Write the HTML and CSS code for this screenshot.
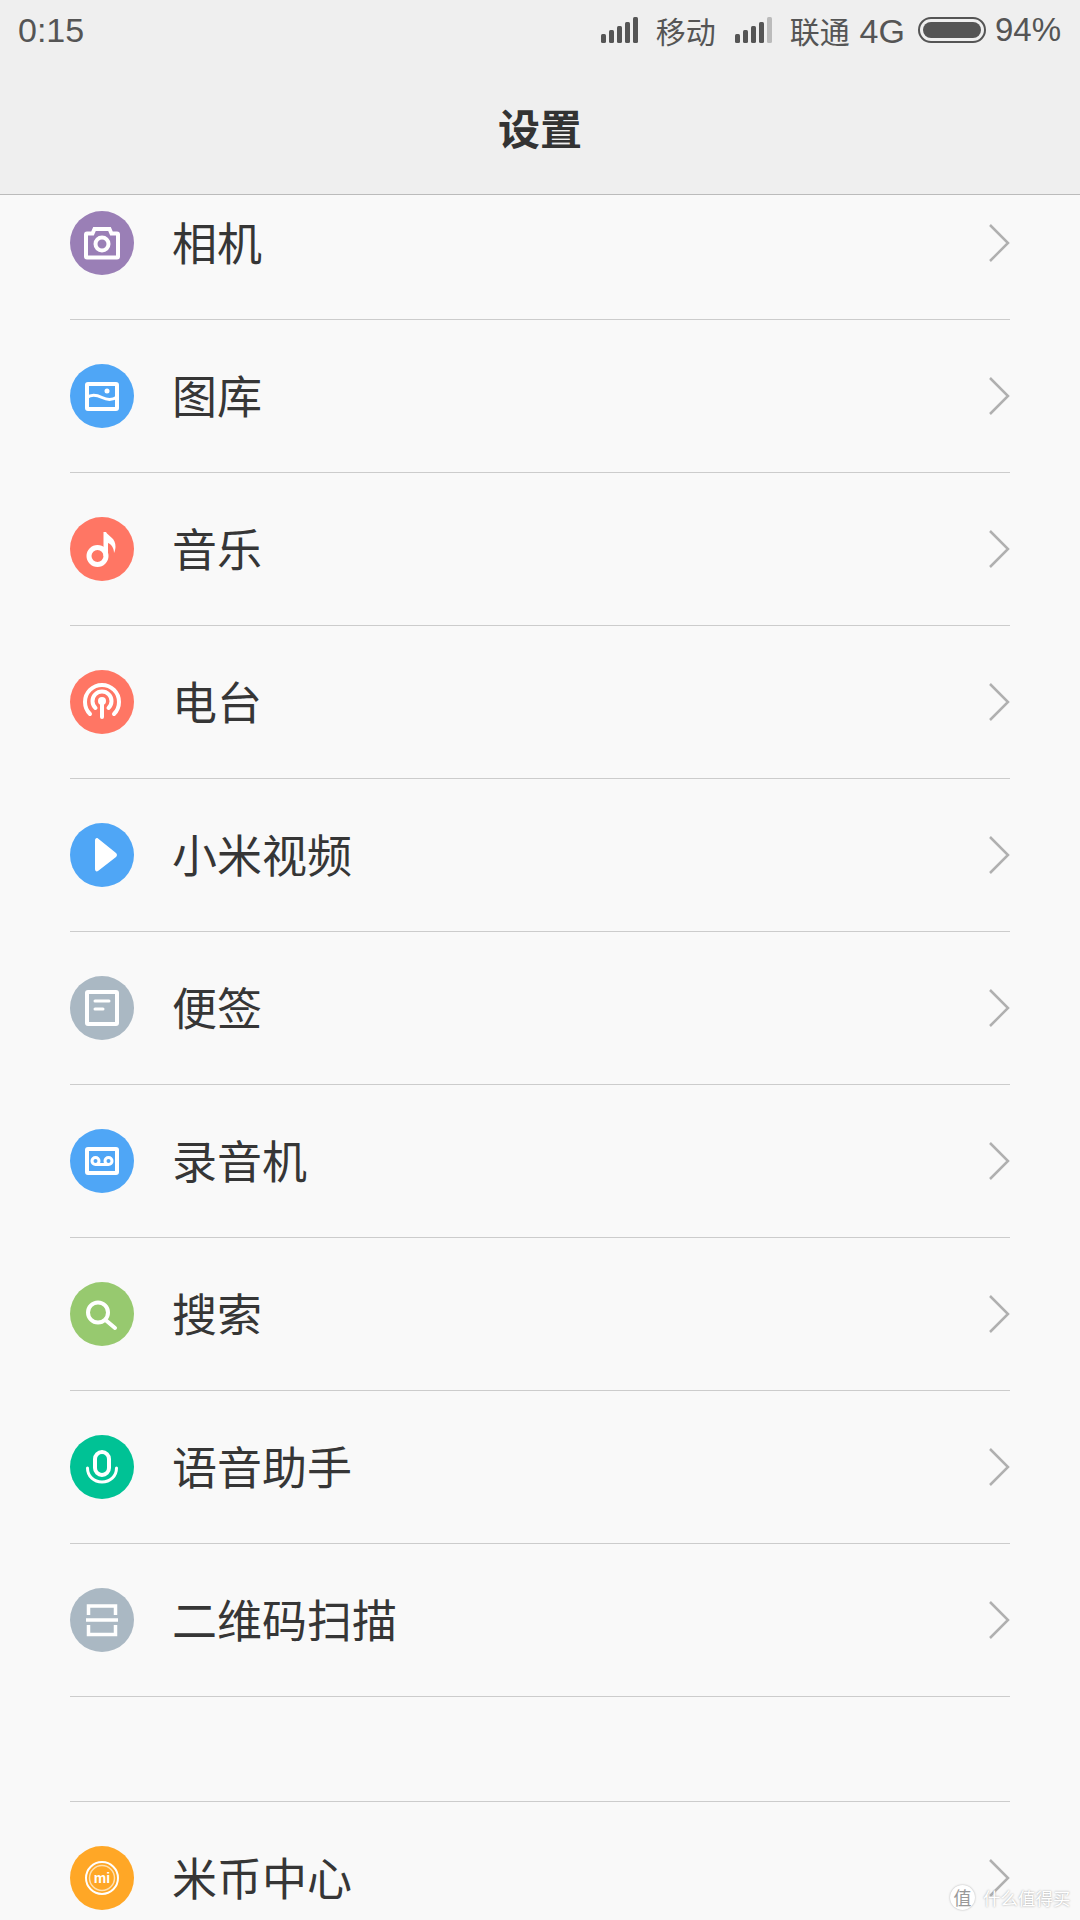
FILE: index.html
```html
<!DOCTYPE html>
<html lang="zh-CN">
<head>
    <meta charset="UTF-8">
    <meta name="viewport" content="width=device-width, initial-scale=1.0">
    <title>设置</title>
    <link rel="stylesheet" href="styles.css">
</head>
<body>
    <header class="top-bar">
        <div class="status-bar">
            <span class="clock">0:15</span>
            <div class="status-right">
                <svg class="signal" viewBox="0 0 37 26"><rect x="0" y="17" width="5" height="9" rx="1.5"/><rect x="8" y="13" width="5" height="13" rx="1.5"/><rect x="16" y="9" width="5" height="17" rx="1.5"/><rect x="24" y="5" width="5" height="21" rx="1.5"/><rect x="32" y="0" width="5" height="26" rx="1.5"/></svg>
                <span class="carrier carrier-first">移动</span>
                <svg class="signal" viewBox="0 0 37 26"><rect x="0" y="17" width="5" height="9" rx="1.5"/><rect x="8" y="13" width="5" height="13" rx="1.5"/><rect x="16" y="9" width="5" height="17" rx="1.5"/><rect x="24" y="5" width="5" height="21" rx="1.5"/><rect class="signal-off" x="32" y="0" width="5" height="26" rx="1.5"/></svg>
                <span class="carrier">联通 <span class="num network">4G</span></span>
                <div class="battery"><div class="battery-fill"></div></div>
                <span class="num percent">94%</span>
            </div>
        </div>
        <h1 class="title">设置</h1>
    </header>

    <main class="viewport">
        <ul class="settings-list">
            <li class="row">
                <svg class="icon" viewBox="0 0 64 64"><circle class="bg-purple" cx="32" cy="32" r="32"/><path class="line" d="M17 22.500h5.500l2-4.500h15l2 4.500h5.500a1 1 0 0 1 1 1v22a1 1 0 0 1-1 1h-30a1 1 0 0 1-1-1v-22a1 1 0 0 1 1-1z"/><circle class="line" cx="32" cy="33" r="6.500"/></svg>
                <span class="label">相机</span>
                <svg class="chevron" viewBox="0 0 22 38"><path d="M2 1l18 18-18 18"/></svg>
            </li>
            <li class="row">
                <svg class="icon" viewBox="0 0 64 64"><circle class="bg-blue" cx="32" cy="32" r="32"/><rect class="line" x="17" y="20" width="30" height="25" rx="1"/><path class="line thin" d="M17 33.500c5-4 10-2.500 15 0s10 3 15-.5"/><circle class="dot" cx="37" cy="27" r="2.500"/></svg>
                <span class="label">图库</span>
                <svg class="chevron" viewBox="0 0 22 38"><path d="M2 1l18 18-18 18"/></svg>
            </li>
            <li class="row">
                <svg class="icon" viewBox="0 0 64 64"><circle class="bg-coral" cx="32" cy="32" r="32"/><circle class="line wide" cx="27.500" cy="39" r="8.500"/><path class="dot" d="M33.500 15h2.500c2 4 10 6 9.500 15-.2 2-.5 4-1.500 6 .2-5-3-9-6-10v13h-4.500z"/></svg>
                <span class="label">音乐</span>
                <svg class="chevron" viewBox="0 0 22 38"><path d="M2 1l18 18-18 18"/></svg>
            </li>
            <li class="row">
                <svg class="icon" viewBox="0 0 64 64"><circle class="bg-coral" cx="32" cy="32" r="32"/><path class="line round" d="M20 44a17 17 0 1 1 24 0"/><path class="line round" d="M25.500 38a9.500 9.500 0 1 1 13 0"/><circle class="dot" cx="32" cy="31" r="4"/><path class="line round" d="M32 31v16"/></svg>
                <span class="label">电台</span>
                <svg class="chevron" viewBox="0 0 22 38"><path d="M2 1l18 18-18 18"/></svg>
            </li>
            <li class="row">
                <svg class="icon" viewBox="0 0 64 64"><circle class="bg-blue" cx="32" cy="32" r="32"/><path class="dot" d="M25 17.500c0-2 1.500-3 3-2l18 14.500c1.300 1 1.300 3 0 4l-18 14c-1.500 1-3 0-3-2z"/></svg>
                <span class="label">小米视频</span>
                <svg class="chevron" viewBox="0 0 22 38"><path d="M2 1l18 18-18 18"/></svg>
            </li>
            <li class="row">
                <svg class="icon" viewBox="0 0 64 64"><circle class="bg-gray" cx="32" cy="32" r="32"/><rect class="line" x="17" y="16" width="30" height="32" rx="1"/><path class="line round thin" d="M25 25h14M25 33h8"/></svg>
                <span class="label">便签</span>
                <svg class="chevron" viewBox="0 0 22 38"><path d="M2 1l18 18-18 18"/></svg>
            </li>
            <li class="row">
                <svg class="icon" viewBox="0 0 64 64"><circle class="bg-blue" cx="32" cy="32" r="32"/><rect class="line" x="17" y="20" width="30" height="24" rx="1"/><circle class="line thin" cx="25.500" cy="32" r="3.500"/><circle class="line thin" cx="38.500" cy="32" r="3.500"/><path class="line thin" d="M25.500 35.500h13"/></svg>
                <span class="label">录音机</span>
                <svg class="chevron" viewBox="0 0 22 38"><path d="M2 1l18 18-18 18"/></svg>
            </li>
            <li class="row">
                <svg class="icon" viewBox="0 0 64 64"><circle class="bg-green" cx="32" cy="32" r="32"/><circle class="line" cx="28" cy="30.500" r="10"/><path class="line round" d="M35.500 38l9.500 8"/></svg>
                <span class="label">搜索</span>
                <svg class="chevron" viewBox="0 0 22 38"><path d="M2 1l18 18-18 18"/></svg>
            </li>
            <li class="row">
                <svg class="icon" viewBox="0 0 64 64"><circle class="bg-teal" cx="32" cy="32" r="32"/><rect class="line" x="25" y="17" width="14" height="23" rx="7"/><path class="line round thin" d="M17.500 33c0 8.500 6.500 14 14.500 14s14.500-5.500 14.500-14"/></svg>
                <span class="label">语音助手</span>
                <svg class="chevron" viewBox="0 0 22 38"><path d="M2 1l18 18-18 18"/></svg>
            </li>
            <li class="row">
                <svg class="icon" viewBox="0 0 64 64"><circle class="bg-gray" cx="32" cy="32" r="32"/><path class="line scan" d="M18.500 27v-9h27v9M16 32h32M18.500 37v9.500h27v-9.500"/></svg>
                <span class="label">二维码扫描</span>
                <svg class="chevron" viewBox="0 0 22 38"><path d="M2 1l18 18-18 18"/></svg>
            </li>
        </ul>

        <ul class="settings-list list-second">
            <li class="row">
                <svg class="icon" viewBox="0 0 64 64"><circle class="bg-orange" cx="32" cy="32" r="32"/><circle class="line ring" cx="32" cy="32" r="16"/><circle class="line ring-soft" cx="32" cy="32" r="12.500"/><text class="mi-text" x="32" y="36.500">mi</text></svg>
                <span class="label">米币中心</span>
                <svg class="chevron" viewBox="0 0 22 38"><path d="M2 1l18 18-18 18"/></svg>
            </li>
        </ul>

        <div class="watermark">
            <span class="watermark-badge">值</span>
            <span class="watermark-text">什么值得买</span>
        </div>
    </main>
</body>
</html>
```

FILE: styles.css
```css
html, body {
    margin: 0;
    padding: 0;
}
body {
    width: 1080px;
    height: 1920px;
    overflow: hidden;
    display: flex;
    flex-direction: column;
    background-color: #f9f9f9;
    color: #333;
    font-family: "Noto Sans CJK SC", "Liberation Sans", sans-serif;
}

/* header */
.top-bar {
    flex: none;
    height: 194px;
    background-color: #efefef;
    border-bottom: 1px solid #bbb;
}
.status-bar {
    display: flex;
    justify-content: space-between;
    align-items: center;
    height: 60px;
    padding: 0 19px 0 18px;
    color: #555;
}
.clock {
    font-family: "Liberation Sans", sans-serif;
    font-size: 34px;
}
.status-right {
    display: flex;
    align-items: center;
    font-size: 30px;
}
.num {
    font-family: "Liberation Sans", sans-serif;
    font-size: 34px;
}
.network {
    margin-left: 3px;
}
.percent {
    font-size: 33px;
}
.signal {
    width: 37px;
    height: 26px;
    fill: #555;
}
.signal-off {
    fill: #bbb;
}
.carrier {
    margin-left: 18px;
    white-space: nowrap;
}
.carrier-first {
    margin-right: 19px;
}
.battery {
    box-sizing: border-box;
    width: 68px;
    height: 26px;
    margin: 0 9px 0 13px;
    padding: 3px;
    border: 2px solid #555;
    border-radius: 13px;
}
.battery-fill {
    width: 100%;
    height: 100%;
    background-color: #555;
    border-radius: 8px;
}
.title {
    margin: 0;
    padding-top: 37px;
    font-size: 42px;
    font-weight: 700;
    line-height: 60px;
    text-align: center;
    color: #333;
}

/* list */
.viewport {
    position: relative;
    flex: 1;
    overflow: hidden;
}
.settings-list {
    list-style: none;
    margin: -28px 70px 0;
    padding: 0;
}
.list-second {
    margin-top: 104px;
    border-top: 1px solid #ccc;
}
.row {
    box-sizing: border-box;
    display: flex;
    align-items: center;
    height: 153px;
    padding-bottom: 1px;
    border-bottom: 1px solid #ccc;
}
.icon {
    flex: none;
    width: 64px;
    height: 64px;
}
.label {
    flex: 1;
    margin-left: 38px;
    padding-bottom: 3px;
    font-size: 45px;
    color: #363636;
}
.chevron {
    flex: none;
    width: 22px;
    height: 38px;
    fill: none;
    stroke: #b0b0b0;
    stroke-width: 2.5;
}

/* icon parts */
.bg-purple { fill: #9a7fb6; }
.bg-blue { fill: #4fa6f6; }
.bg-coral { fill: #ff7664; }
.bg-gray { fill: #aab8c3; }
.bg-green { fill: #97c96f; }
.bg-teal { fill: #00c295; }
.bg-orange { fill: #ffa726; }
.line {
    fill: none;
    stroke: #fff;
    stroke-width: 4;
}
.thin { stroke-width: 3; }
.wide { stroke-width: 5; }
.scan { stroke-width: 3.500; }
.round { stroke-linecap: round; }
.dot { fill: #fff; }
.ring { stroke-width: 2; }
.ring-soft {
    stroke: #ffe0b0;
    stroke-width: 1.500;
}
.mi-text {
    fill: #fff;
    font-family: "Liberation Sans", sans-serif;
    font-size: 14px;
    font-weight: 700;
    text-anchor: middle;
}

/* watermark over the last row */
.watermark {
    position: absolute;
    left: 950px;
    top: 1690px;
    display: flex;
    align-items: center;
    gap: 8px;
    color: #fff;
    text-shadow: 0 0 2px #999;
}
.watermark-badge {
    width: 25px;
    height: 25px;
    border-radius: 50%;
    background-color: #fff;
    box-shadow: 0 0 2px #aaa;
    color: #999;
    font-size: 18px;
    line-height: 25px;
    text-align: center;
    text-shadow: none;
}
.watermark-text {
    font-size: 17.500px;
    white-space: nowrap;
}
```
